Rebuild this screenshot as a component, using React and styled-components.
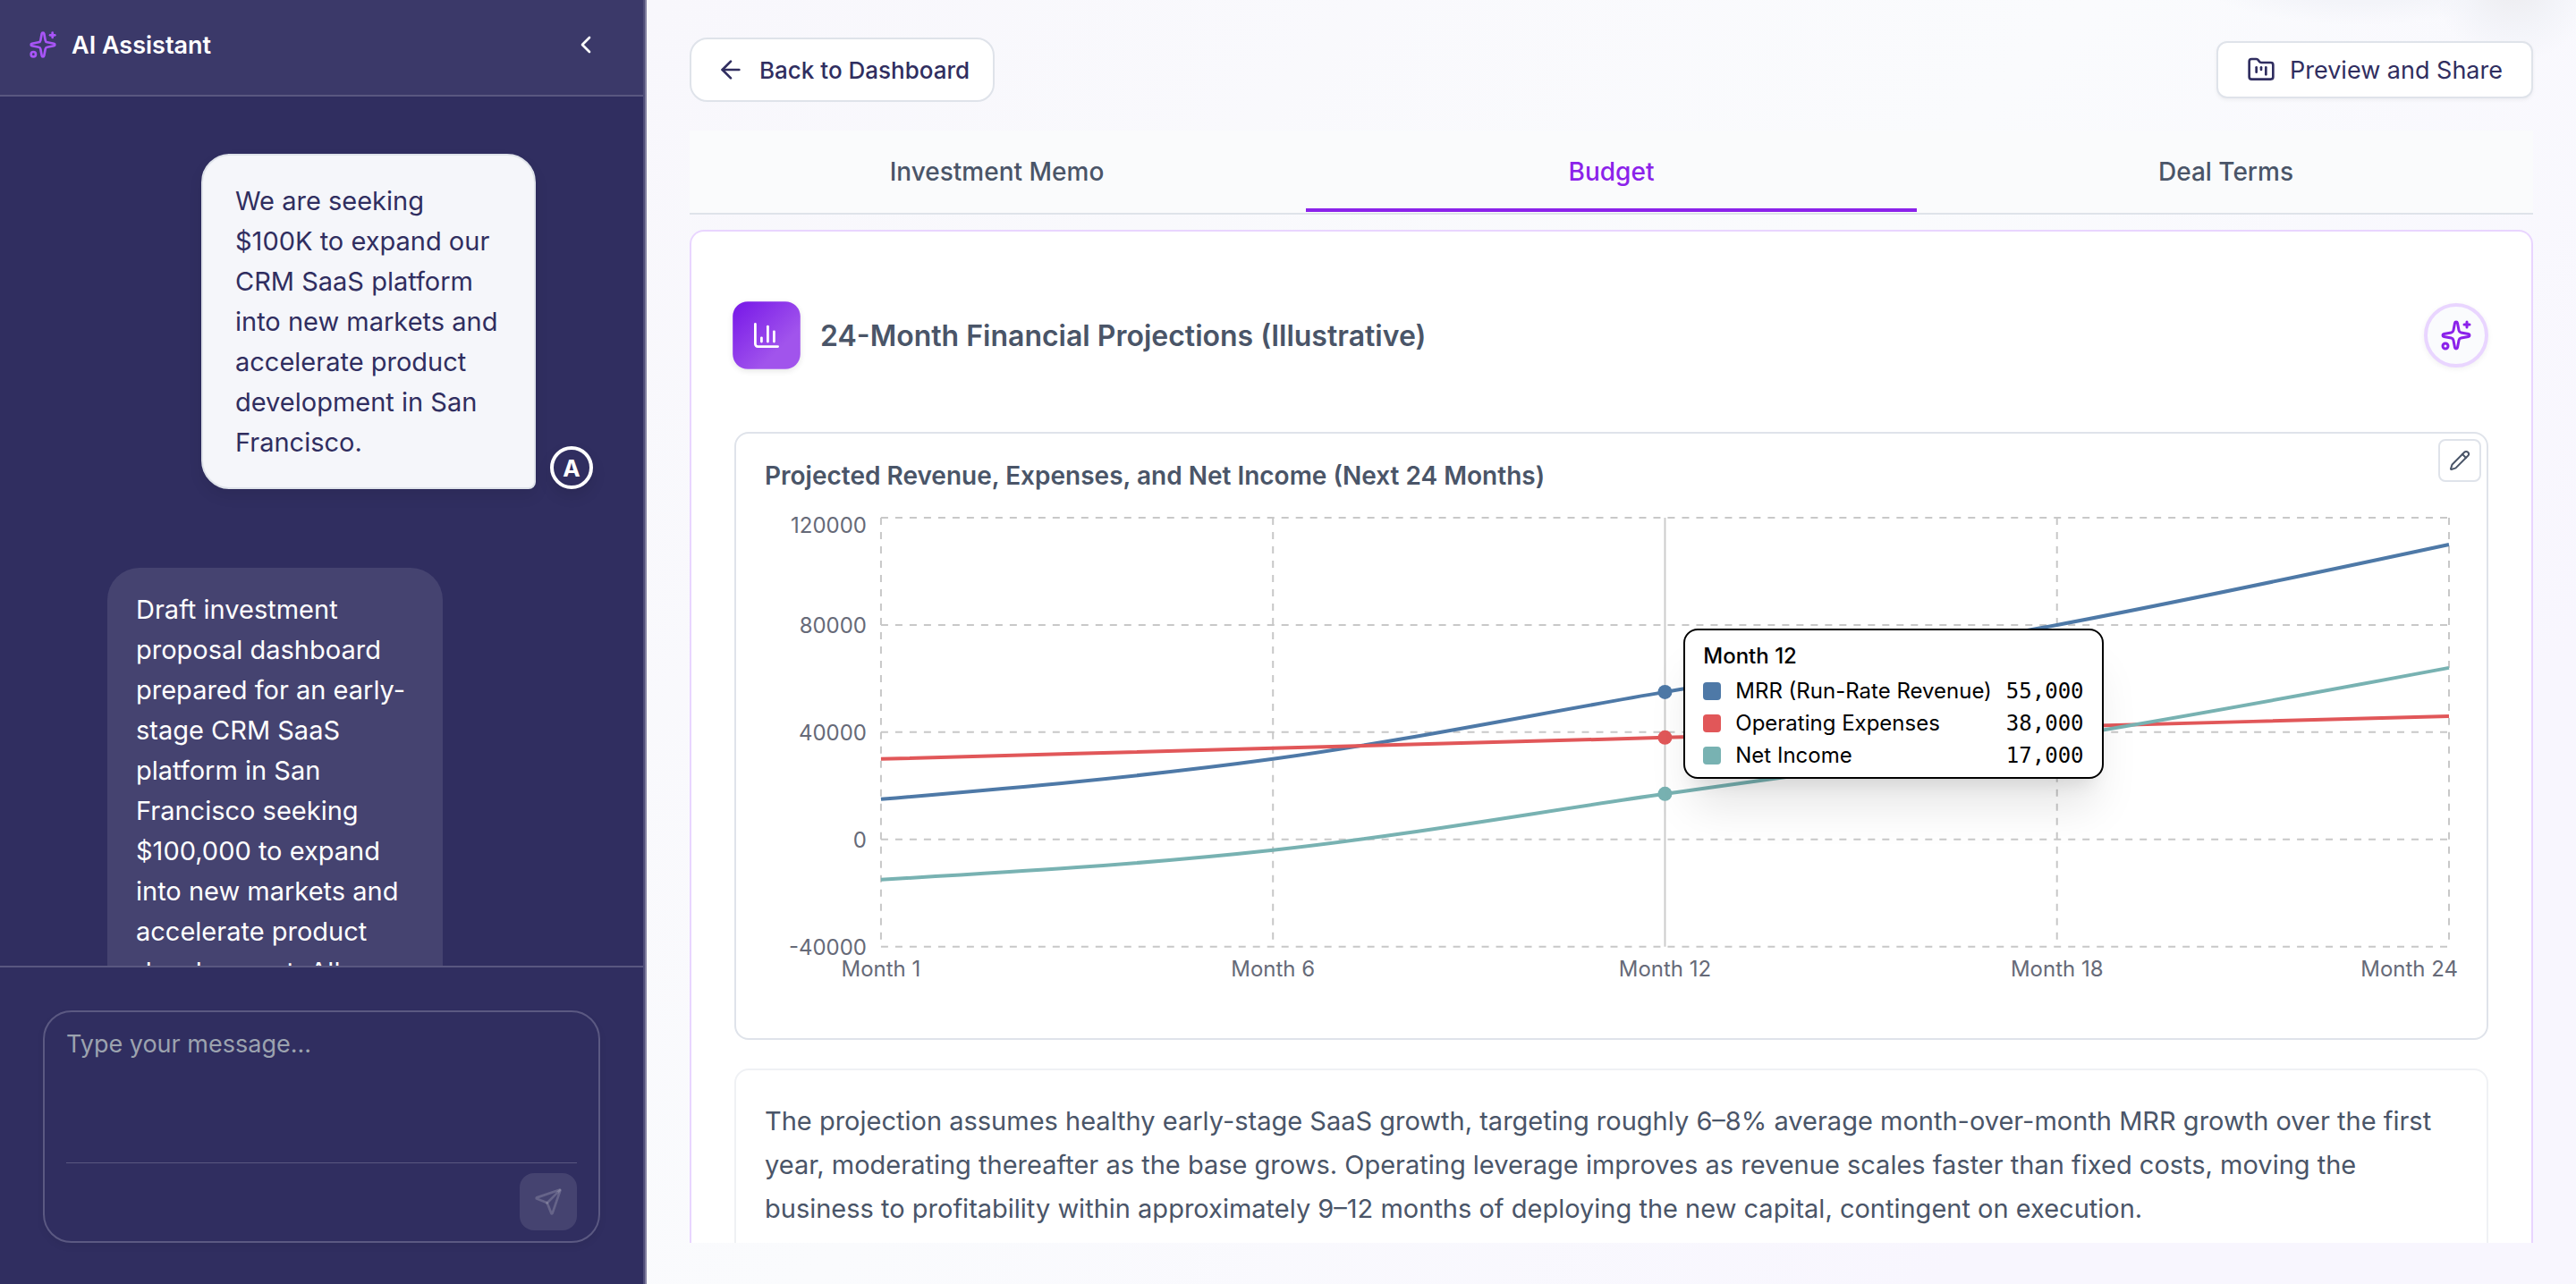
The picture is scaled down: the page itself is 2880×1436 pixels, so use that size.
import React from 'react'
import styled, { createGlobalStyle } from 'styled-components'
import { ArrowLeft, ChartColumn, ChevronLeft, FolderKanban, Pencil, Sparkles } from 'lucide-react'


const months = ['Month 1', 'Month 6', 'Month 12', 'Month 18', 'Month 24']
const ticks = [120000, 80000, 40000, 0, -40000]
const series = [
    { name: 'MRR (Run-Rate Revenue)', color: '#4e79a7', values: [15000, 30000, 55000, 80000, 110000] },
    { name: 'Operating Expenses', color: '#e15759', values: [30000, 34000, 38000, 42000, 46000] },
    { name: 'Net Income', color: '#78b2b2', values: [-15000, -4000, 17000, 38000, 64000] },
]
const active = 2

const plot = { width: 1894, height: 560, left: 130, right: 1884, top: 10, bottom: 490 }

const xAt = (i) => plot.left + (i * (plot.right - plot.left)) / (months.length - 1)
const yAt = (v) => plot.top + ((120000 - v) / 160000) * (plot.bottom - plot.top)

// monotone cubic through the points, so the curve never overshoots
const linePath = (values) => {
    const pts = values.map((v, i) => [xAt(i), yAt(v)])
    const n = pts.length
    const d = []
    for (let i = 0; i < n - 1; i++) {
        d.push((pts[i + 1][1] - pts[i][1]) / (pts[i + 1][0] - pts[i][0]))
    }
    const m = pts.map((p, i) => {
        if (i === 0 || i === n - 1) return null
        const a = d[i - 1]
        const b = d[i]
        return (Math.sign(a) + Math.sign(b)) * Math.min(Math.abs(a), Math.abs(b), 0.5 * Math.abs((a + b) / 2)) || 0
    })
    m[0] = (3 * d[0] - m[1]) / 2
    m[n - 1] = (3 * d[n - 2] - m[n - 2]) / 2

    let path = `M${pts[0][0]},${pts[0][1]}`
    for (let i = 0; i < n - 1; i++) {
        const dx = (pts[i + 1][0] - pts[i][0]) / 3
        path += `C${pts[i][0] + dx},${pts[i][1] + dx * m[i]} ${pts[i + 1][0] - dx},${pts[i + 1][1] - dx * m[i + 1]} ${pts[i + 1][0]},${pts[i + 1][1]}`
    }
    return path
}

const Chart = () => (
    <ChartArea>
        <ChartSvg viewBox={`0 0 ${plot.width} ${plot.height}`} role="img" aria-label="Projected revenue, expenses and net income">
            {ticks.map((t) => (
                <GridLine key={t} x1={plot.left} x2={plot.right} y1={yAt(t)} y2={yAt(t)} />
            ))}
            {months.map((m, i) => i !== active && (
                <GridLine key={m} x1={xAt(i)} x2={xAt(i)} y1={plot.top} y2={plot.bottom} />
            ))}
            {ticks.map((t, i) => (
                <AxisText key={t} x={plot.left - 16} y={yAt(t) + (i === 0 ? 17 : 9)} textAnchor="end">{t}</AxisText>
            ))}
            {months.map((m, i) => (
                <AxisText
                    key={m}
                    x={i === months.length - 1 ? plot.width : xAt(i)}
                    y={plot.bottom + 33}
                    textAnchor={i === months.length - 1 ? 'end' : 'middle'}
                >
                    {m}
                </AxisText>
            ))}
            <line x1={xAt(active)} x2={xAt(active)} y1={plot.top} y2={plot.bottom} stroke="#ccc" strokeWidth="2" />
            {series.map((s) => (
                <path key={s.name} d={linePath(s.values)} fill="none" stroke={s.color} strokeWidth="4" />
            ))}
            {series.map((s) => (
                <circle key={s.name} cx={xAt(active)} cy={yAt(s.values[active])} r="8" fill={s.color} />
            ))}
        </ChartSvg>
        <Tooltip>
            <TooltipTitle>{months[active]}</TooltipTitle>
            {series.map((s) => (
                <TooltipRow key={s.name}>
                    <Swatch $color={s.color} />
                    <span>{s.name}</span>
                    <TooltipValue>{s.values[active].toLocaleString('en-US')}</TooltipValue>
                </TooltipRow>
            ))}
        </Tooltip>
    </ChartArea>
)

const App = () => {
    return (
        <Page>
            <GlobalStyle />
            <Sidebar>
                <SidebarHeader>
                    <Sparkles size={32} color="#a855f7" />
                    <SidebarTitle>AI Assistant</SidebarTitle>
                    <CollapseButton aria-label="Collapse assistant">
                        <ChevronLeft size={32} />
                    </CollapseButton>
                </SidebarHeader>

                <Messages>
                    <UserRow>
                        <UserBubble>
                            We are seeking $100K to expand our CRM SaaS platform into new markets and accelerate product development in San Francisco.
                        </UserBubble>
                        <Avatar>A</Avatar>
                    </UserRow>
                    <AssistantRow>
                        <AssistantBubble>
                            Draft investment proposal dashboard prepared for an early-stage CRM SaaS platform in San Francisco seeking $100,000 to expand into new markets and accelerate product development. All
                        </AssistantBubble>
                    </AssistantRow>
                </Messages>

                <Composer>
                    <ComposerBox>
                        <MessageInput aria-label="Message" placeholder="Type your message..." />
                        <ComposerActions>
                            <SendButton aria-label="Send message">
                                <svg width="32" height="32" viewBox="0 0 24 24" fill="none" stroke="rgba(255, 255, 255, 0.18)" strokeWidth="2" strokeLinecap="round" strokeLinejoin="round">
                                    <path d="M14.536 21.686a.5.5 0 0 0 .937-.024l6.5-19a.496.496 0 0 0-.635-.635l-19 6.5a.5.5 0 0 0-.024.937l7.93 3.18a2 2 0 0 1 1.112 1.11z" />
                                    <path d="m21.854 2.147-10.94 10.939" />
                                </svg>
                            </SendButton>
                        </ComposerActions>
                    </ComposerBox>
                </Composer>
            </Sidebar>

            <Main>
                <Toolbar>
                    <BackButton>
                        <ArrowLeft size={32} />
                        Back to Dashboard
                    </BackButton>
                    <ShareButton>
                        <FolderKanban size={32} />
                        Preview and Share
                    </ShareButton>
                </Toolbar>

                <Tabs role="tablist">
                    <Tab role="tab">Investment Memo</Tab>
                    <Tab role="tab" aria-selected="true" $active>Budget</Tab>
                    <Tab role="tab">Deal Terms</Tab>
                </Tabs>

                <Panel>
                    <PanelHeader>
                        <PanelIcon>
                            <ChartColumn size={32} />
                        </PanelIcon>
                        <PanelTitle>24-Month Financial Projections (Illustrative)</PanelTitle>
                        <MagicButton aria-label="Improve with AI">
                            <Sparkles size={36} />
                        </MagicButton>
                    </PanelHeader>

                    <ChartCard>
                        <ChartTitle>Projected Revenue, Expenses, and Net Income (Next 24 Months)</ChartTitle>
                        <EditButton aria-label="Edit chart">
                            <Pencil size={24} />
                        </EditButton>
                        <Chart />
                    </ChartCard>

                    <TextCard>
                        The projection assumes healthy early-stage SaaS growth, targeting roughly 6–8% average month-over-month MRR growth over the first year, moderating thereafter as the base grows. Operating leverage improves as revenue scales faster than fixed costs, moving the business to profitability within approximately 9–12 months of deploying the new capital, contingent on execution.
                    </TextCard>
                </Panel>
            </Main>
        </Page>
    )
}

const GlobalStyle = createGlobalStyle`
    * {
        box-sizing: border-box;
    }

    body {
        margin: 0;
        font-family: Inter, "Liberation Sans", sans-serif;
    }

    button, textarea {
        font-family: inherit;
    }
`

const Page = styled.div`
    display: flex;
    height: 100vh;
    overflow: hidden;
`

const Sidebar = styled.aside`
    display: flex;
    flex-direction: column;
    flex: none;
    width: 721px;
    background: #302e60;
    border-right: 2px solid #4f4d78;
    color: white;
`

const SidebarHeader = styled.header`
    display: flex;
    align-items: center;
    gap: 16px;
    height: 108px;
    padding: 0 48px 6px 32px;
    background: #3b3969;
    border-bottom: 2px solid #595780;
`

const SidebarTitle = styled.h2`
    flex: 1;
    margin: 0;
    font-size: 27px;
    font-weight: 600;
`

const CollapseButton = styled.button`
    display: flex;
    padding: 0;
    border: 0;
    background: none;
    color: white;
`

const Messages = styled.div`
    flex: 1;
    min-height: 0;
    overflow: hidden;
    padding: 64px 56px 0;
`

const UserRow = styled.div`
    display: flex;
    justify-content: flex-end;
    align-items: flex-end;
    gap: 16px;
`

const AssistantRow = styled.div`
    display: flex;
    margin-top: 88px;
    padding-left: 64px;
`

const UserBubble = styled.div`
    width: 374px;
    padding: 28px 36px;
    background: #f5f6fa;
    border: 2px solid #dfe3ea;
    border-radius: 32px 32px 8px 32px;
    box-shadow: 0 8px 16px rgba(0, 0, 0, 0.08);
    color: #302e60;
    font-size: 29px;
    line-height: 45px;
`

const AssistantBubble = styled.div`
    width: 375px;
    padding: 24px 32px;
    background: #454370;
    border-radius: 36px;
    font-size: 29px;
    line-height: 45px;
`

const Avatar = styled.div`
    display: flex;
    align-items: center;
    justify-content: center;
    width: 48px;
    height: 48px;
    border: 4px solid white;
    border-radius: 50%;
    box-shadow: 0 8px 16px rgba(0, 0, 0, 0.1);
    font-size: 26px;
    font-weight: 700;
`

const Composer = styled.div`
    padding: 48px 48px 46px;
    border-top: 2px solid #595780;
`

const ComposerBox = styled.div`
    height: 260px;
    display: flex;
    flex-direction: column;
    padding: 12px 24px;
    border: 2px solid #5b5982;
    border-radius: 32px;
    box-shadow: 0 4px 8px rgba(0, 0, 0, 0.06);
`

const MessageInput = styled.textarea`
    flex: 1;
    padding: 6px 0;
    border: 0;
    outline: none;
    resize: none;
    background: none;
    color: white;
    font-size: 27px;
    line-height: 36px;

    &::placeholder {
        color: #9ca3af;
    }
`

const ComposerActions = styled.div`
    display: flex;
    justify-content: flex-end;
    padding-top: 11px;
    border-top: 1px solid #595780;
`

const SendButton = styled.button`
    display: flex;
    align-items: center;
    justify-content: center;
    width: 64px;
    height: 64px;
    border: 0;
    border-radius: 16px;
    background: #454370;
`

const Main = styled.main`
    flex: 1;
    min-width: 0;
    display: flex;
    flex-direction: column;
    padding: 42px 48px 46px;
    border-left: 2px solid #8280a0;
    background:
        radial-gradient(90px 90px at calc(100% - 70px) -20px, #eeeef2 20%, #f3f4f9 60%, transparent 100%),
        radial-gradient(180px 50px at calc(100% - 240px) -22px, #f3f4f9 50%, transparent 100%),
        linear-gradient(135deg, #f8f7fc 0%, #fafbfd 45%, #f8f6fe 80%, #f8f6fe 100%);
`

const Toolbar = styled.div`
    display: flex;
    justify-content: space-between;
    align-items: center;
    height: 72px;
    margin-bottom: 32px;
`

const OutlineButton = styled.button`
    display: flex;
    align-items: center;
    gap: 16px;
    border: 2px solid #dfe3ea;
    background: white;
    color: #302e60;
`

const BackButton = styled(OutlineButton)`
    height: 72px;
    padding: 0 26px 0 28px;
    border-radius: 20px;
    font-size: 26px;
    font-weight: 500;
`

const ShareButton = styled(OutlineButton)`
    height: 64px;
    padding: 0 32px;
    border-radius: 12px;
    box-shadow: 0 2px 4px rgba(0, 0, 0, 0.05);
    font-size: 27px;
    font-weight: 400;
`

const Tabs = styled.div`
    display: grid;
    grid-template-columns: repeat(3, 1fr);
    flex: none;
    height: 94px;
    padding-bottom: 1px;
    background: #fafbfc;
    border-bottom: 2px solid #dfe3ea;
`

const Tab = styled.button`
    margin: 0 2px;
    padding: 4px 0 0;
    border: 0;
    border-bottom: 4px solid ${(props) => (props.$active ? '#8b22ea' : 'transparent')};
    background: none;
    color: ${(props) => (props.$active ? '#8b22ea' : '#4a5568')};
    font-size: 28px;
    font-weight: 500;
`

const Panel = styled.section`
    flex: 1;
    min-height: 0;
    overflow: hidden;
    margin-top: 17px;
    padding: 80px 48px 0;
    background: white;
    border: 2px solid #e9d5ff;
    border-bottom: 0;
    border-radius: 16px 16px 0 0;
`

const PanelHeader = styled.div`
    display: flex;
    align-items: center;
    gap: 24px;
    height: 72px;
    margin-bottom: 72px;
`

const PanelIcon = styled.div`
    display: flex;
    align-items: center;
    justify-content: center;
    width: 72px;
    height: 72px;
    border-radius: 16px;
    background: linear-gradient(135deg, #7c1fe8 10%, #a154ec 70%);
    box-shadow: 0 2px 6px rgba(0, 0, 0, 0.1);
    color: white;
    transform: scale(1.05);
`

const PanelTitle = styled.h1`
    flex: 1;
    margin: 0;
    color: #4a5568;
    font-size: 32px;
    font-weight: 600;
`

const MagicButton = styled.button`
    display: flex;
    align-items: center;
    justify-content: center;
    width: 72px;
    height: 72px;
    padding: 0;
    border: 4px solid #e9d5ff;
    border-radius: 50%;
    background: #fafbfd;
    box-shadow: 0 2px 6px rgba(0, 0, 0, 0.06);
    color: #8b22ea;
`

const ChartCard = styled.div`
    position: relative;
    padding: 26px 32px 32px;
    border: 2px solid #dfe3ea;
    border-radius: 16px;
`

const ChartTitle = styled.h3`
    margin: 0 0 16px;
    color: #4a5568;
    font-size: 28px;
    font-weight: 600;
    line-height: 42px;
`

const EditButton = styled.button`
    position: absolute;
    top: 6px;
    right: 6px;
    display: flex;
    align-items: center;
    justify-content: center;
    width: 48px;
    height: 48px;
    padding: 0;
    border: 2px solid #dfe3ea;
    border-radius: 8px;
    background: white;
    color: #4a5568;
`

const ChartArea = styled.div`
    position: relative;
`

const ChartSvg = styled.svg`
    display: block;
    width: 100%;
`

const GridLine = styled.line`
    stroke: #c8c8c8;
    stroke-width: 2px;
    stroke-dasharray: 8 8;
`

const AxisText = styled.text`
    fill: #666a78;
    font-size: 24px;
`

const Tooltip = styled.div`
    position: absolute;
    top: 24%;
    left: calc(53% + 24px);
    padding: 11px 20px 6px;
    border: 2px solid black;
    border-radius: 16px;
    background: white;
    box-shadow: 0 40px 50px -10px rgba(0, 0, 0, 0.1), 0 16px 20px -12px rgba(0, 0, 0, 0.1);
    color: black;
    font-size: 24px;
`

const TooltipTitle = styled.div`
    font-weight: 500;
    line-height: 36px;
    margin-bottom: 3px;
`

const TooltipRow = styled.div`
    display: flex;
    align-items: center;
    gap: 16px;
    line-height: 36px;
`

const Swatch = styled.span`
    width: 20px;
    height: 20px;
    border-radius: 4px;
    background: ${(props) => props.$color};
`

const TooltipValue = styled.span`
    margin-left: auto;
    font-family: "DejaVu Sans Mono", monospace;
    font-weight: 500;
`

const TextCard = styled.div`
    margin-top: 32px;
    padding: 32px 32px 48px;
    border: 2px solid #eff1f4;
    border-radius: 16px;
    color: #4a5568;
    font-size: 29px;
    line-height: 49px;
`

export default App
